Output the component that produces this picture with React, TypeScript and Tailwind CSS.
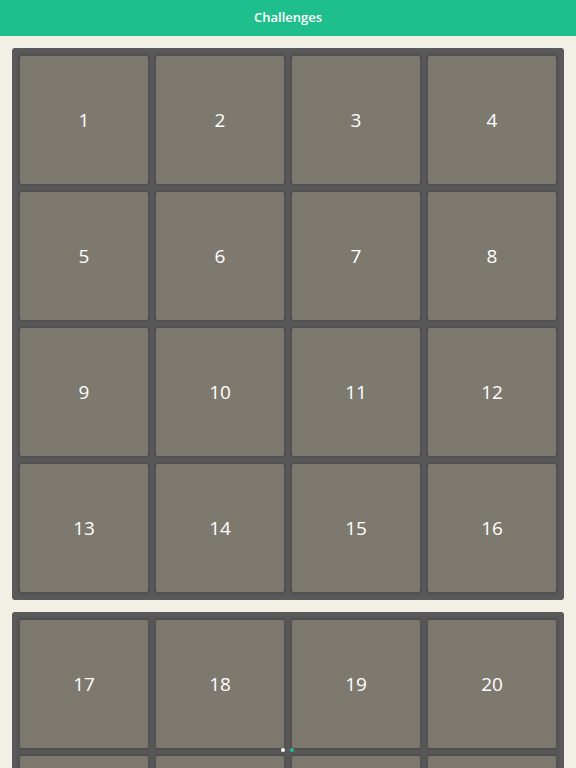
const pages = [
  Array.from({ length: 16 }, (_, i) => i + 1),
  Array.from({ length: 16 }, (_, i) => i + 17),
];

function Tile({ n }: { n: number }) {
  return (
    <div className="flex h-[128px] w-[128px] items-center justify-center rounded-[2px] bg-[#7e796f] text-[19px] font-medium text-white shadow-[0_0_3px_1px_rgba(66,64,62,0.55)]">
      {n}
    </div>
  );
}

export default function App() {
  return (
    <div
      className="relative h-[768px] w-[576px] overflow-hidden bg-[#f2efe5]"
      style={{ fontFamily: '"Open Sans", "Noto Sans", sans-serif' }}
    >
      <div className="flex h-[36px] items-center justify-center bg-[#1fbe8d] text-[13px] font-semibold text-white">
        Challenges
      </div>
      <div className="flex flex-col items-center gap-[12px] pt-[12px]">
        {pages.map((page, p) => (
          <div
            key={p}
            className="grid shrink-0 grid-cols-4 gap-[8px] rounded-[3px] bg-[#5a5858] p-[8px]"
          >
            {page.map((n) => (
              <Tile key={n} n={n} />
            ))}
          </div>
        ))}
      </div>
      <div className="absolute left-[281px] top-[748px] flex gap-[5px]">
        <span className="h-[4px] w-[4px] rounded-full bg-white" />
        <span className="h-[4px] w-[4px] rounded-full bg-[#1fbe8d]" />
      </div>
    </div>
  );
}
